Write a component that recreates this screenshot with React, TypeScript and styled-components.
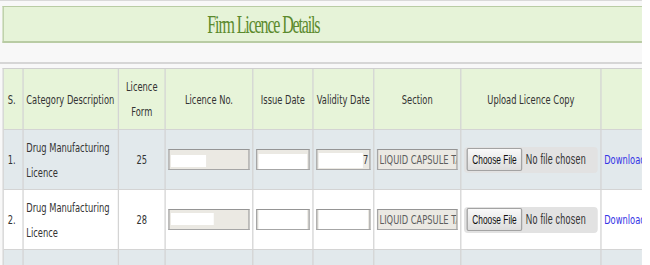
import React from "react";
import styled, { createGlobalStyle } from "styled-components";

/* The reference is a horizontally squeezed screenshot: the page is laid out
   at its natural width and squeezed by SQUEEZE on the x axis. */
const SQUEEZE = 0.64;
const PAGE_W = 1003;
const COLUMNS = "31px 149px 73px 137px 94px 95px 136px 219px 140px";

const GlobalStyle = createGlobalStyle`
  html, body { margin: 0; padding: 0; overflow: hidden; background: #ffffff; }
  #root { width: 650px; height: 265px; overflow: hidden; }
`;

const Page = styled.div`
  width: ${PAGE_W}px;
  height: 265px;
  overflow: hidden;
  background: #f8f8f8;
  transform: scaleX(${SQUEEZE});
  transform-origin: 0 0;
  font-family: "DejaVu Sans", Verdana, sans-serif;
  font-size: 13px;
  color: #333333;
`;

const TopRule = styled.div`
  height: 1px;
  background: #d9d9d9;
  margin-bottom: 5px;
`;

const TitleBar = styled.div`
  margin-left: 4px;
  height: 37px;
  box-sizing: border-box;
  border: 1px solid #b9cca4;
  border-left-width: 2px;
  border-bottom-width: 2px;
  border-right: none;
  background: #e6f3d8;
  display: flex;
  align-items: center;
  padding: 1px 0 0 318px;
`;

const Title = styled.h1`
  margin: 0;
  font-family: "Liberation Serif", "Times New Roman", serif;
  font-weight: normal;
  font-size: 25px;
  letter-spacing: -1.8px;
  color: #5b8a2d;
  white-space: nowrap;
`;

const Divider = styled.div`
  margin-top: 19px;
  height: 2px;
  background: #d6d6d6;
`;

const Table = styled.div`
  margin: 4px 0 0 4px;
  border-top: 1px solid #cfcfcf;
  border-left: 2px solid #cfcfcf;
`;

const Row = styled.div<{ $tone: "head" | "tint" | "plain" }>`
  display: grid;
  grid-template-columns: ${COLUMNS};
  box-sizing: border-box;
  height: ${(p) => (p.$tone === "head" ? 61 : 60)}px;
  border-bottom: 1px solid #d4d4d4;
  background: ${(p) =>
    p.$tone === "head" ? "#e7f4d9" : p.$tone === "tint" ? "#e2e9ec" : "#ffffff"};
`;

const Cell = styled.div<{ $align?: "left" | "center"; $pad?: number }>`
  display: flex;
  align-items: center;
  justify-content: ${(p) => (p.$align === "center" ? "center" : "flex-start")};
  text-align: ${(p) => (p.$align === "center" ? "center" : "left")};
  padding: 0 4px 0 ${(p) => p.$pad ?? 4}px;
  border-right: 2px solid #d4d4d4;
  line-height: 25px;
  min-width: 0;
  overflow: hidden;
`;

const Field = styled.div`
  width: 100%;
  height: 21px;
  box-sizing: border-box;
  border: 1px solid #a6a6a6;
  border-left-width: 2px;
  border-right-width: 2px;
  border-top-color: #959595;
  background: #ebe9e3;
  display: flex;
  align-items: center;
  padding: 0 2px;
  overflow: hidden;
  white-space: nowrap;
  color: #5e5e5e;
  line-height: 19px;
`;

const Mask = styled.span<{ $w?: number; $top: number; $h: number }>`
  align-self: flex-start;
  display: block;
  background: #ffffff;
  margin-top: ${(p) => p.$top}px;
  height: ${(p) => p.$h}px;
  ${(p) => (p.$w ? `width: ${p.$w}px; flex: none;` : "flex: 1;")}
`;

const Tail = styled.span`
  margin-left: auto;
  color: #333333;
`;

const FileBox = styled.div`
  width: 100%;
  height: 26px;
  box-sizing: border-box;
  background: #e2e2e2;
  border-radius: 6px / 4px;
  display: flex;
  align-items: center;
  gap: 5px;
  padding-left: 4px;
  white-space: nowrap;
  overflow: hidden;
`;

const ChooseButton = styled.button`
  flex: none;
  height: 23px;
  box-sizing: border-box;
  padding: 0 7px;
  border: 1px solid #a3a3a3;
  border-left-width: 2px;
  border-right-width: 2px;
  border-radius: 3px / 2px;
  background: linear-gradient(#f9f9f9, #dddddd);
  font-family: "Liberation Sans", Arial, sans-serif;
  font-size: 13px;
  color: #111111;
`;

const NoFile = styled.span`
  font-family: "Liberation Sans", Arial, sans-serif;
  font-size: 14px;
  letter-spacing: 0.4px;
  color: #333333;
`;

const DownloadLink = styled.a`
  color: #3434e6;
  text-decoration: none;
  white-space: nowrap;
`;

type MaskSpec = { w?: number; top: number; h: number };
type Licence = {
  n: string;
  category: string;
  form: string;
  no: MaskSpec;
  issue: MaskSpec;
  validity: MaskSpec;
  tail?: string;
  section: string;
  tone: "tint" | "plain";
};

const rows: Licence[] = [
  {
    n: "1.",
    category: "Drug Manufacturing Licence",
    form: "25",
    no: { w: 55, top: 5, h: 12 },
    issue: { top: 4, h: 15 },
    validity: { w: 69, top: 3, h: 15 },
    tail: "7",
    section: "LIQUID CAPSULE TABLET",
    tone: "tint",
  },
  {
    n: "2.",
    category: "Drug Manufacturing Licence",
    form: "28",
    no: { w: 67, top: 3, h: 12 },
    issue: { top: 0, h: 19 },
    validity: { top: 0, h: 19 },
    section: "LIQUID CAPSULE TABLET",
    tone: "plain",
  },
  {
    n: "3.",
    category: "Loan Licence",
    form: "25",
    no: { w: 60, top: 4, h: 12 },
    issue: { top: 0, h: 19 },
    validity: { top: 0, h: 19 },
    section: "LIQUID CAPSULE TABLET",
    tone: "tint",
  },
];

export default function App() {
  return (
    <>
      <GlobalStyle />
      <Page>
        <TopRule />
        <TitleBar>
          <Title>Firm Licence Details</Title>
        </TitleBar>
        <Divider />
        <Table>
          <Row $tone="head">
            <Cell $pad={6}>S.</Cell>
            <Cell>Category Description</Cell>
            <Cell $align="center">Licence Form</Cell>
            <Cell $align="center">Licence No.</Cell>
            <Cell $align="center">Issue Date</Cell>
            <Cell $align="center">Validity Date</Cell>
            <Cell $align="center">Section</Cell>
            <Cell $align="center">Upload Licence Copy</Cell>
            <Cell />
          </Row>
          {rows.map((r) => (
            <Row key={r.n} $tone={r.tone}>
              <Cell $pad={6}>{r.n}</Cell>
              <Cell>{r.category}</Cell>
              <Cell $align="center">{r.form}</Cell>
              <Cell>
                <Field>
                  <Mask $w={r.no.w} $top={r.no.top} $h={r.no.h} />
                </Field>
              </Cell>
              <Cell>
                <Field>
                  <Mask $w={r.issue.w} $top={r.issue.top} $h={r.issue.h} />
                </Field>
              </Cell>
              <Cell>
                <Field>
                  <Mask $w={r.validity.w} $top={r.validity.top} $h={r.validity.h} />
                  {r.tail && <Tail>{r.tail}</Tail>}
                </Field>
              </Cell>
              <Cell>
                <Field>{r.section}</Field>
              </Cell>
              <Cell>
                <FileBox>
                  <ChooseButton type="button">Choose File</ChooseButton>
                  <NoFile>No file chosen</NoFile>
                </FileBox>
              </Cell>
              <Cell>
                <DownloadLink href="#">Download</DownloadLink>
              </Cell>
            </Row>
          ))}
        </Table>
      </Page>
    </>
  );
}
